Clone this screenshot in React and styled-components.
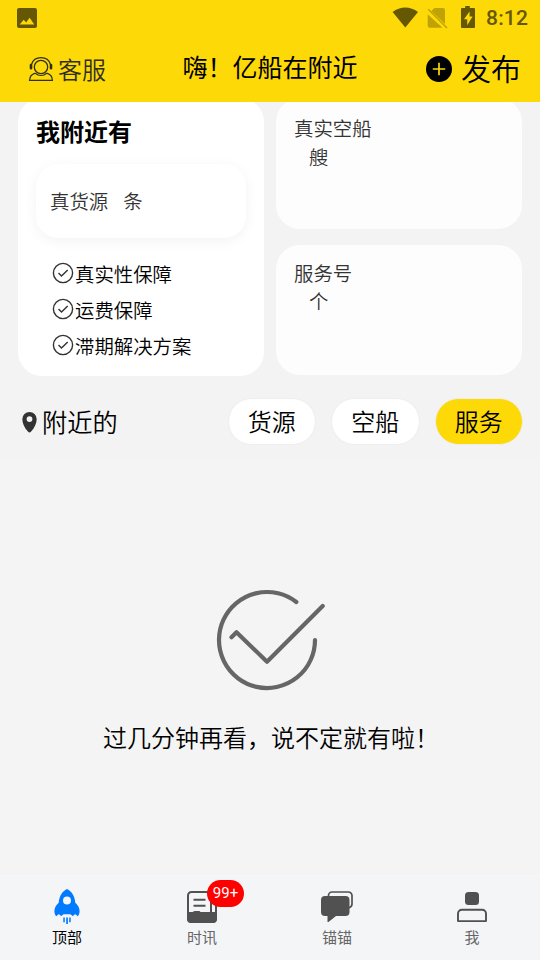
import React, { useState } from 'react';
import styled, { createGlobalStyle } from 'styled-components';

const guarantees = ['真实性保障', '运费保障', '滞期解决方案'];
const filters = ['货源', '空船', '服务'];

const App = () => {
  const [filter, setFilter] = useState('服务');
  const [tab, setTab] = useState('顶部');
  const tabs = [
    { name: '顶部', icon: <RocketIcon /> },
    { name: '时讯', icon: <NewsIcon />, badge: '99+' },
    { name: '锚锚', icon: <ChatIcon /> },
    { name: '我', icon: <UserIcon /> },
  ];
  return (
    <Screen>
      <GlobalStyle />
      <Header>
        <StatusBar>
          <PictureIcon />
          <StatusIcons />
          <Clock>8:12</Clock>
        </StatusBar>
        <NavBar>
          <Service>
            <ServiceIcon />
            客服
          </Service>
          <Title>嗨！亿船在附近</Title>
          <Publish>
            <PlusIcon />
            <span>发布</span>
          </Publish>
        </NavBar>
      </Header>
      <Main>
        <Cards>
          <NearbyCard>
            <h2>我附近有</h2>
            <Goods>
              <span>真货源</span>
              <span>条</span>
            </Goods>
            <ul>
              {guarantees.map((item) => (
                <li key={item}>
                  <CheckIcon />
                  {item}
                </li>
              ))}
            </ul>
          </NearbyCard>
          <Column>
            <CountCard $height={131}>
              <p>真实空船</p>
              <Unit>艘</Unit>
            </CountCard>
            <CountCard $height={130}>
              <p>服务号</p>
              <Unit>个</Unit>
            </CountCard>
          </Column>
        </Cards>
        <FilterRow>
          <Place>
            <PinIcon />
            附近的
          </Place>
          <Chips>
            {filters.map((item) => (
              <Chip
                key={item}
                $active={filter === item}
                onClick={() => setFilter(item)}
              >
                {item}
              </Chip>
            ))}
          </Chips>
        </FilterRow>
        <Empty>
          <DoneIcon />
          <p>过几分钟再看，说不定就有啦！</p>
        </Empty>
      </Main>
      <TabBar>
        {tabs.map(({ name, icon, badge }) => (
          <Tab key={name} $active={tab === name} onClick={() => setTab(name)}>
            <IconBox>
              {icon}
              {badge && <Badge>{badge}</Badge>}
            </IconBox>
            {name}
          </Tab>
        ))}
      </TabBar>
    </Screen>
  );
};

export default App;

const PictureIcon = () => (
  <svg width='20' height='20' viewBox='0 0 20 20'>
    <path
      fill='#665703'
      fillRule='evenodd'
      d='M2 0h16a2 2 0 0 1 2 2v16a2 2 0 0 1-2 2H2a2 2 0 0 1-2-2V2a2 2 0 0 1 2-2zM2.7 16.4h14.6l-4.7-6.6-3.4 4.6-2.5-2.6z'
    />
  </svg>
);

const StatusIcons = () => (
  <svg width='84' height='24' viewBox='0 0 84 24'>
    <path fill='#665703' d='M.6 6C8-.1 18.600-.1 26 6L13.300 21.600z' />
    <path
      fill='#bfa306'
      d='M42.500 2H51a2 2 0 0 1 2 2v14L39.300 4.900zM35.700 8.200L50.500 21.800H37.700a2 2 0 0 1-2-2z'
    />
    <path stroke='#bfa306' strokeWidth='1.500' d='M36.200 3.300L55 22' />
    <path
      fill='#665703'
      fillRule='evenodd'
      d='M73.200 0h4.600v2H82a1 1 0 0 1 1 1v18a1 1 0 0 1-1 1H70a1 1 0 0 1-1-1V3a1 1 0 0 1 1-1h3.200zM77.600 5.500L72 13.300h3.200v6l5.400-8.700h-3z'
    />
  </svg>
);

const ServiceIcon = () => (
  <svg
    width='26'
    height='26'
    viewBox='0 0 26 26'
    fill='none'
    stroke='#2f2f20'
    strokeWidth='1.300'
  >
    <circle cx='13' cy='11' r='6.700' />
    <path d='M3.500 8.500C5 3.500 8.500 1.700 13 1.700s8 1.800 9.500 6.800' />
    <path
      strokeWidth='2.600'
      strokeLinecap='round'
      d='M3 9v3.200M23 9v3.200'
    />
    <path d='M7.300 17.200C3.500 18.300 1.700 20.500 1.600 24.300h22.800c-.1-3.800-1.900-6-5.700-7.100M7.300 17.200c3.400 3 8 3 11.400 0' />
  </svg>
);

const PlusIcon = () => (
  <svg width='26' height='26' viewBox='0 0 26 26'>
    <circle cx='13' cy='13' r='13' />
    <path stroke='#fdd908' strokeWidth='1.700' d='M13 6.800v12.400M6.800 13h12.400' />
  </svg>
);

const CheckIcon = () => (
  <svg
    width='22'
    height='22'
    viewBox='0 0 22 22'
    fill='none'
    stroke='#333'
    strokeWidth='1.400'
  >
    <circle cx='11' cy='11' r='9.600' />
    <path d='M6.500 11.100l3 3 6.200-6.200' />
  </svg>
);

const PinIcon = () => (
  <svg width='15' height='21' viewBox='0 0 15 21'>
    <path
      fill='#333'
      fillRule='evenodd'
      d='M7.500 0A7.200 7.200 0 0 0 .3 7.200c0 4 2.200 8.500 5.600 12.400q1.600 1.700 3.200 0c3.400-3.900 5.600-8.400 5.600-12.400A7.200 7.200 0 0 0 7.500 0zm0 4.200a2.900 2.900 0 1 1 0 5.800 2.900 2.900 0 0 1 0-5.800z'
    />
  </svg>
);

const DoneIcon = () => (
  <svg
    width='110'
    height='102'
    viewBox='0 0 110 102'
    fill='none'
    stroke='#666'
    strokeWidth='4.200'
    strokeLinecap='round'
    strokeLinejoin='round'
  >
    <path d='M80.300 13A48 48 0 1 0 99 51' />
    <path d='M15.500 48.200l5-5L51 72.800 106.700 17' />
  </svg>
);

const RocketIcon = () => (
  <svg width='26' height='36' viewBox='0 0 26 36' fill='#007aff'>
    <path
      fillRule='evenodd'
      d='M13 0c4.800 2.200 7.700 7 8.300 13.700 2.800 2.400 4.400 5.300 4.300 8.700-.1 2.300-1 4-1.900 4.800-.8-1-1.600-1.700-2.500-1.900-1 .2-1.500 1.200-2.200 1.900l-2.600-1.900H9.600L7 27.200c-.7-.7-1.200-1.700-2.200-1.900-.9.200-1.700.9-2.500 1.900-.9-.8-1.800-2.500-1.900-4.800-.1-3.400 1.500-6.300 4.300-8.700C5.300 7 8.200 2.200 13 0zm0 7.500a4 4 0 1 0 0 8 4 4 0 0 0 0-8z'
    />
    <path d='M9.300 28.500h1.500v4.700H9.300zM12.200 28.500h1.700V35h-1.700zM15.200 28.500h1.500v4.700h-1.500z' />
  </svg>
);

const NewsIcon = () => (
  <svg width='30' height='36' viewBox='0 0 30 36'>
    <rect
      x='1'
      y='3'
      width='28'
      height='30'
      rx='3.500'
      fill='none'
      stroke='#515151'
      strokeWidth='2'
    />
    <path
      fill='none'
      stroke='#515151'
      strokeWidth='2'
      d='M24 3v21M6.500 10.700h12M6.500 16.700h12'
    />
    <path
      fill='#515151'
      d='M0 23h5.500l2-1h5l1 1H30v7a4 4 0 0 1-4 4H4a4 4 0 0 1-4-4z'
    />
  </svg>
);

const ChatIcon = () => (
  <svg width='32' height='36' viewBox='0 0 32 36'>
    <path
      fill='none'
      stroke='#515151'
      strokeWidth='1.700'
      d='M7.500 7.500V6.500A3.500 3.500 0 0 1 11 3h16.500A3.500 3.500 0 0 1 31 6.500V15q0 3-3.500 4'
    />
    <path
      fill='#515151'
      d='M4 7h20.500a4 4 0 0 1 4 4v12a4 4 0 0 1-4 4H15l-7.500 6h-1V27H4a4 4 0 0 1-4-4V11a4 4 0 0 1 4-4z'
    />
  </svg>
);

const UserIcon = () => (
  <svg width='30' height='36' viewBox='0 0 30 36'>
    <rect x='8' y='3' width='14' height='13' rx='3.500' fill='#515151' />
    <path
      fill='none'
      stroke='#515151'
      strokeWidth='1.900'
      d='M1 32V24.500A3.800 3.800 0 0 1 4.800 20.700h20.400a3.800 3.800 0 0 1 3.800 3.800V32q0 .1-.1.100H1.100q-.1 0-.1-.1z'
    />
  </svg>
);

const GlobalStyle = createGlobalStyle`
  * {
    box-sizing: border-box;
    margin: 0;
    padding: 0;
  }
  body {
    font-family: 'Noto Sans CJK SC', sans-serif;
    font-weight: 350;
    color: #000;
  }
  button {
    font: inherit;
    color: inherit;
    border: none;
    background: none;
  }
  svg {
    display: block;
    flex-shrink: 0;
  }
`;

const Screen = styled.div`
  width: 540px;
  height: 960px;
  display: flex;
  flex-direction: column;
  overflow: hidden;
  background: #f3f3f3;
`;

const Header = styled.header`
  height: 102px;
  flex-shrink: 0;
  background: #fdd908;
`;

const StatusBar = styled.div`
  height: 36px;
  display: flex;
  align-items: center;
  padding: 0 12px 0 17px;
  > svg:nth-child(2) {
    margin: 0 10px 0 auto;
  }
`;

const Clock = styled.span`
  width: 42px;
  font-family: Roboto, sans-serif;
  font-size: 21px;
  font-weight: 500;
  line-height: 38px;
  letter-spacing: 0.2px;
  color: #665703;
`;

const NavBar = styled.nav`
  height: 65px;
  display: grid;
  grid-template-columns: 1fr auto 1fr;
  align-items: center;
  padding: 0 19px 0 28px;
`;

const Service = styled.button`
  display: flex;
  align-items: center;
  gap: 4px;
  font-size: 24px;
  line-height: 36px;
  color: #2f2f20;
`;

const Title = styled.h1`
  font-size: 25px;
  font-weight: 400;
  line-height: 36px;
  margin: -5px 0 0 -9px;
`;

const Publish = styled.button`
  display: flex;
  align-items: center;
  justify-content: flex-end;
  gap: 9px;
  font-size: 30px;
  line-height: 36px;
  span {
    margin-top: -4px;
  }
`;

const Main = styled.main`
  flex: 1;
  display: flex;
  flex-direction: column;
  overflow: hidden;
`;

const Cards = styled.section`
  display: flex;
  gap: 12px;
  margin-top: -4px;
  padding: 0 18px;
`;

const NearbyCard = styled.div`
  width: 246px;
  height: 278px;
  padding: 17px 18px 0;
  border-radius: 24px;
  background: #fff;
  h2 {
    font-size: 24px;
    font-weight: 700;
    line-height: 32px;
  }
  ul {
    list-style: none;
    margin-top: 17px;
    padding-left: 16px;
  }
  li {
    display: flex;
    align-items: center;
    gap: 1px;
    height: 36px;
    font-size: 19.4px;
  }
`;

const Goods = styled.div`
  display: flex;
  align-items: center;
  gap: 15px;
  height: 74px;
  margin-top: 17px;
  padding-left: 14px;
  border-radius: 22px;
  box-shadow: 0 3px 14px rgba(0, 0, 0, 0.05);
  font-size: 19.4px;
  line-height: 28px;
  color: #333;
`;

const Column = styled.div`
  display: flex;
  flex-direction: column;
  gap: 16px;
`;

const CountCard = styled.div`
  width: 246px;
  height: ${(props) => props.$height}px;
  padding: 15px 18px 0;
  border-radius: 24px;
  background: #fdfdfd;
  font-size: 19.4px;
  line-height: 29px;
  color: #333;
  & + & {
    padding-top: 14px;
    line-height: 28px;
  }
`;

const Unit = styled.p`
  padding-left: 15px;
`;

const FilterRow = styled.section`
  display: flex;
  align-items: center;
  justify-content: space-between;
  height: 83px;
  padding: 7px 17px 0 22px;
`;

const Place = styled.div`
  display: flex;
  align-items: center;
  gap: 5px;
  font-size: 25.2px;
  line-height: 36px;
  svg {
    margin-top: 2px;
  }
`;

const Chips = styled.div`
  display: flex;
  gap: 15px;
`;

const Chip = styled.button`
  width: 88.500px;
  height: 47px;
  border: 1px solid #eee;
  border-radius: 24px;
  background: ${(props) => (props.$active ? '#fdd908' : '#fff')};
  font-size: 24px;
  line-height: 44px;
`;

const Empty = styled.section`
  flex: 1;
  display: flex;
  flex-direction: column;
  align-items: center;
  gap: 28px;
  padding: 130px 0 0 2px;
  background: #f4f4f4;
  p {
    font-size: 24px;
    line-height: 36px;
  }
`;

const TabBar = styled.footer`
  height: 85px;
  flex-shrink: 0;
  display: grid;
  grid-template-columns: repeat(4, 1fr);
  border-top: 1px solid #f7f7f7;
  background: #f4f5f7;
`;

const Tab = styled.button`
  display: flex;
  flex-direction: column;
  align-items: center;
  padding: 13px 1px 0 0;
  font-size: 15px;
  font-weight: 400;
  line-height: 24px;
  color: ${(props) => (props.$active ? '#000' : '#666')};
`;

const IconBox = styled.span`
  position: relative;
  height: 36px;
`;

const Badge = styled.span`
  position: absolute;
  top: -9px;
  left: 20px;
  width: 37px;
  height: 27px;
  border-radius: 14px;
  background: #f00;
  font-family: Roboto, sans-serif;
  font-size: 15px;
  font-weight: 400;
  line-height: 27px;
  text-align: center;
  color: #fff;
`;
